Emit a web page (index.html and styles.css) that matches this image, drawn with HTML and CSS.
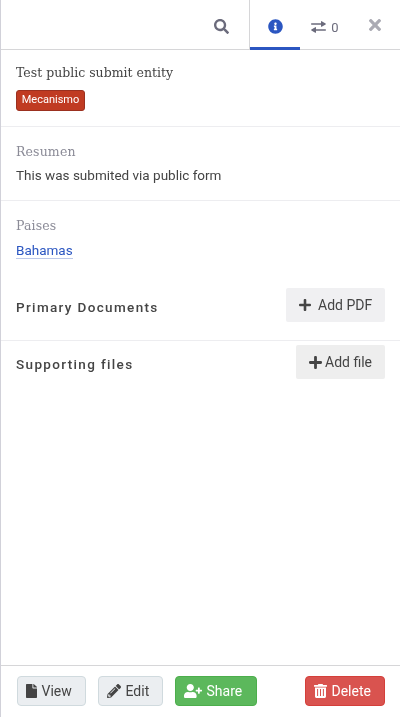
FILE: index.html
```html
<!DOCTYPE html>
<html lang="en">
<head>
<meta charset="utf-8">
<title>Entity</title>
<link rel="stylesheet" href="styles.css">
</head>
<body>
<aside class="panel">
  <header class="tabs">
    <div class="tab search"><svg width="15" height="15" viewBox="0 0 512 512"><path d="M505 442.700L405.300 343c-4.500-4.500-10.600-7-17-7H372c27.600-35.300 44-79.700 44-128C416 93.100 322.900 0 208 0S0 93.100 0 208s93.100 208 208 208c48.300 0 92.700-16.400 128-44v16.300c0 6.400 2.500 12.500 7 17l99.700 99.700c9.400 9.400 24.600 9.400 33.900 0l28.300-28.300c9.400-9.400 9.400-24.600.1-34zM208 336c-70.700 0-128-57.200-128-128 0-70.700 57.200-128 128-128 70.700 0 128 57.200 128 128 0 70.700-57.200 128-128 128z"/></svg></div>
    <div class="tab info"><svg width="15" height="15" viewBox="0 0 512 512"><path d="M256 8C119.043 8 8 119.083 8 256c0 136.997 111.043 248 248 248s248-111.003 248-248C504 119.083 392.957 8 256 8zm0 110c23.196 0 42 18.804 42 42s-18.804 42-42 42-42-18.804-42-42 18.804-42 42-42zm56 254c0 6.627-5.373 12-12 12h-88c-6.627 0-12-5.373-12-12v-24c0-6.627 5.373-12 12-12h12v-64h-12c-6.627 0-12-5.373-12-12v-24c0-6.627 5.373-12 12-12h64c6.627 0 12 5.373 12 12v100h12c6.627 0 12 5.373 12 12v24z"/></svg></div>
    <div class="tab relations"><svg width="15" height="12" viewBox="0 0 15 12"><path d="M.6 2.300H10V.6q0-.8.700-.3l3.900 2.300q.5.400 0 .8L10.700 5.700Q10 6 10 5.400V3.800H.6Q0 3.800 0 3.100t.6-.8zM14.400 8.200H5V6.600q0-.8-.7-.3L.4 8.600q-.5.400 0 .8l3.900 2.300q.7.300.7-.3V9.700h9.400q.6 0 .6-.7t-.6-.8z"/></svg><span class="count">0</span></div>
    <div class="tab close"><svg width="12" height="12" viewBox="0 80 352 352"><path d="M242.720 256l100.070-100.070c12.280-12.280 12.280-32.190 0-44.480l-22.240-22.240c-12.280-12.280-32.190-12.280-44.480 0L176 189.280 75.930 89.210c-12.280-12.280-32.190-12.280-44.480 0L9.210 111.450c-12.280 12.280-12.280 32.190 0 44.480L109.280 256 9.210 356.070c-12.280 12.280-12.280 32.190 0 44.480l22.240 22.240c12.280 12.280 32.200 12.280 44.480 0L176 322.720l100.070 100.070c12.280 12.280 32.200 12.280 44.480 0l22.240-22.240c12.280-12.280 12.280-32.190 0-44.480L242.720 256z"/></svg></div>
  </header>
  <main class="body">
    <section class="head">
      <h1 class="slab title">Test public submit entity</h1>
      <span class="label">Mecanismo</span>
    </section>
    <section class="field summary">
      <div class="slab name">Resumen</div>
      <div class="value">This was submited via public form</div>
    </section>
    <section class="field countries">
      <div class="slab name">Paises</div>
      <div class="value"><a class="link">Bahamas</a></div>
    </section>
    <section class="files primary">
      <h2>Primary Documents</h2>
      <button class="add pdf"><svg width="12" height="12" viewBox="0 0 12 12"><path d="M4.700 1q0-1 1-1h.6q1 0 1 1v3.700H11q1 0 1 1v.6q0 1-1 1H7.300V11q0 1-1 1h-.6q-1 0-1-1V7.300H1q-1 0-1-1v-.6q0-1 1-1h3.700z"/></svg><span>Add PDF</span></button>
    </section>
    <section class="files supporting">
      <h2>Supporting files</h2>
      <button class="add file"><svg width="13" height="13" viewBox="0 0 12 12"><path d="M4.700 1q0-1 1-1h.6q1 0 1 1v3.700H11q1 0 1 1v.6q0 1-1 1H7.300V11q0 1-1 1h-.6q-1 0-1-1V7.300H1q-1 0-1-1v-.6q0-1 1-1h3.700z"/></svg><span>Add file</span></button>
    </section>
  </main>
  <footer class="actions">
    <button class="btn view"><svg width="11" height="14" viewBox="0 0 384 512" preserveAspectRatio="none"><path d="M224 136V0H24C10.700 0 0 10.700 0 24v464c0 13.300 10.700 24 24 24h336c13.300 0 24-10.700 24-24V160H248c-13.200 0-24-10.800-24-24zm160-14.100v6.100H256V0h6.100c6.400 0 12.500 2.500 17 7l97.900 98c4.500 4.500 7 10.600 7 16.900z"/></svg><span>View</span></button>
    <button class="btn edit"><svg width="14" height="14" viewBox="0 0 512 512"><path d="M497.900 142.100l-46.100 46.100c-4.700 4.700-12.300 4.700-17 0l-111-111c-4.700-4.700-4.700-12.300 0-17l46.100-46.100c18.700-18.700 49.100-18.700 67.900 0l60.100 60.100c18.800 18.700 18.800 49.100 0 67.900zM284.200 99.800L21.600 362.400.4 483.900c-2.900 16.400 11.400 30.600 27.800 27.800l121.500-21.300 262.600-262.600c4.700-4.700 4.700-12.300 0-17l-111-111c-4.800-4.700-12.400-4.700-17.100 0zM124.100 339.900c-5.500-5.500-5.500-14.300 0-19.800l154-154c5.500-5.500 14.300-5.500 19.800 0s5.500 14.300 0 19.800l-154 154c-5.500 5.500-14.300 5.500-19.800 0zM88 424h48v36.300l-64.500 11.300-31.100-31.100L51.700 376H88v48z"/></svg><span>Edit</span></button>
    <button class="btn share"><svg width="18" height="14" viewBox="0 0 640 512" preserveAspectRatio="none"><path d="M624 208h-64v-64c0-8.800-7.200-16-16-16h-32c-8.800 0-16 7.200-16 16v64h-64c-8.800 0-16 7.200-16 16v32c0 8.800 7.200 16 16 16h64v64c0 8.800 7.200 16 16 16h32c8.800 0 16-7.200 16-16v-64h64c8.800 0 16-7.200 16-16v-32c0-8.800-7.200-16-16-16zm-400 48c70.700 0 128-57.300 128-128S294.700 0 224 0 96 57.300 96 128s57.300 128 128 128zm89.600 32h-16.700c-22.200 10.200-46.900 16-72.900 16s-50.600-5.800-72.900-16h-16.700C60.200 288 0 348.200 0 422.400V464c0 26.500 21.500 48 48 48h352c26.500 0 48-21.500 48-48v-41.600c0-74.200-60.200-134.400-134.400-134.400z"/></svg><span>Share</span></button>
    <button class="btn delete"><svg width="13" height="14" viewBox="0 0 13 14"><path fill-rule="evenodd" d="M.5.9H3.800L4.200.3Q4.400 0 4.800 0h3.400q.4 0 .6.300l.4.600h3.300q.5 0 .5.500v.8q0 .5-.5.500H.5Q0 2.700 0 2.200v-.8Q0 .9.500.9zM1 3.400h11v9.200q0 1.400-1.300 1.400H2.300Q1 14 1 12.600zM3.100 5.100v7h1v-7zm2.900 0v7h1v-7zm2.900 0v7h1v-7z"/></svg><span>Delete</span></button>
  </footer>
</aside>
</body>
</html>
```
FILE: styles.css
```css
* { box-sizing: border-box; }
body {
  margin: 0;
  background: #fff;
  color: #444;
  font: 13.5px/20px Roboto, sans-serif;
}
svg { display: block; flex: none; fill: currentColor; }
.panel {
  display: flex;
  flex-direction: column;
  height: 717px;
  border-left: 1px solid #d1d1d9;
  will-change: transform;
}
.tabs {
  display: flex;
  flex: none;
  height: 50px;
  justify-content: flex-end;
  border-bottom: 1px solid #d6d6d8;
  color: #6b6b7c;
}
.tab { display: flex; align-items: center; justify-content: center; height: 50px; }
.search { width: 56px; padding-top: 3px; border-right: 1px solid #d6d6d8; }
.info { width: 50px; padding-top: 6px; color: #2b56c1; border-bottom: 3px solid #2b56c1; }
.relations { width: 50px; gap: 5px; padding-top: 4px; }
.count { padding-top: 1px; font-size: 13px; }
.close { width: 50px; color: #aaaab3; }
.slab {
  font-family: "Roboto Slab", "DejaVu Serif", serif;
  font-weight: 300;
}
.body { flex: 1; }
.head { height: 77px; padding: 13px 15px 0; border-bottom: 1px solid #ededf0; }
.title { margin: 0; font-size: 12.5px; line-height: 20px; letter-spacing: 0; }
.label {
  display: block;
  width: 69px;
  height: 21px;
  margin-top: 7px;
  border: 1px solid #9b301f;
  border-radius: 3px;
  background: #c03b22;
  color: #fff;
  font-size: 11px;
  line-height: 18px;
  text-align: center;
}
.field { padding: 15px 15px 0; }
.summary { height: 74px; border-bottom: 1px solid #ededf0; }
.countries { height: 80px; }
.name { color: #8b8b97; font-size: 12.5px; letter-spacing: .15px; }
.value { margin-top: 4px; line-height: 19px; }
.countries .value { margin-top: 5px; }
.link { color: #2b56c1; border-bottom: 1px solid #bdc9ea; }
.files { display: flex; justify-content: space-between; padding: 0 15px; }
.files h2 { margin: 9px 0 0; font-size: 13.5px; line-height: 20px; font-weight: 500; letter-spacing: 1.35px; }
.primary { height: 60px; padding-top: 7px; border-bottom: 1px solid #ededf0; }
.supporting { padding-top: 4px; }
.add, .btn {
  display: flex;
  align-items: center;
  border: 0;
  color: #444;
  font: 14px/20px Roboto, sans-serif;
  white-space: nowrap;
}
.add { height: 34px; padding: 0 13px; border-radius: 2px; }
.pdf { width: 99px; gap: 7px; background: #f0f0f2; }
.file { width: 89px; gap: 3px; background: #eee; }
.actions {
  display: flex;
  flex: none;
  height: 52px;
  padding: 10px 15px 0 16px;
  border-top: 1px solid #d6d6d8;
}
.btn { height: 30px; padding: 0 8px; gap: 4.5px; border: 1px solid #d0dade; border-radius: 4px; background: #ebeef1; }
.view { width: 69px; }
.edit { width: 65px; margin-left: 12px; }
.share { width: 82px; margin-left: 12px; background: #5cb85c; border-color: #4cae4c; color: #fff; }
.delete { width: 80px; margin-left: auto; background: #d9534f; border-color: #d43f3a; color: #fff; }
```
